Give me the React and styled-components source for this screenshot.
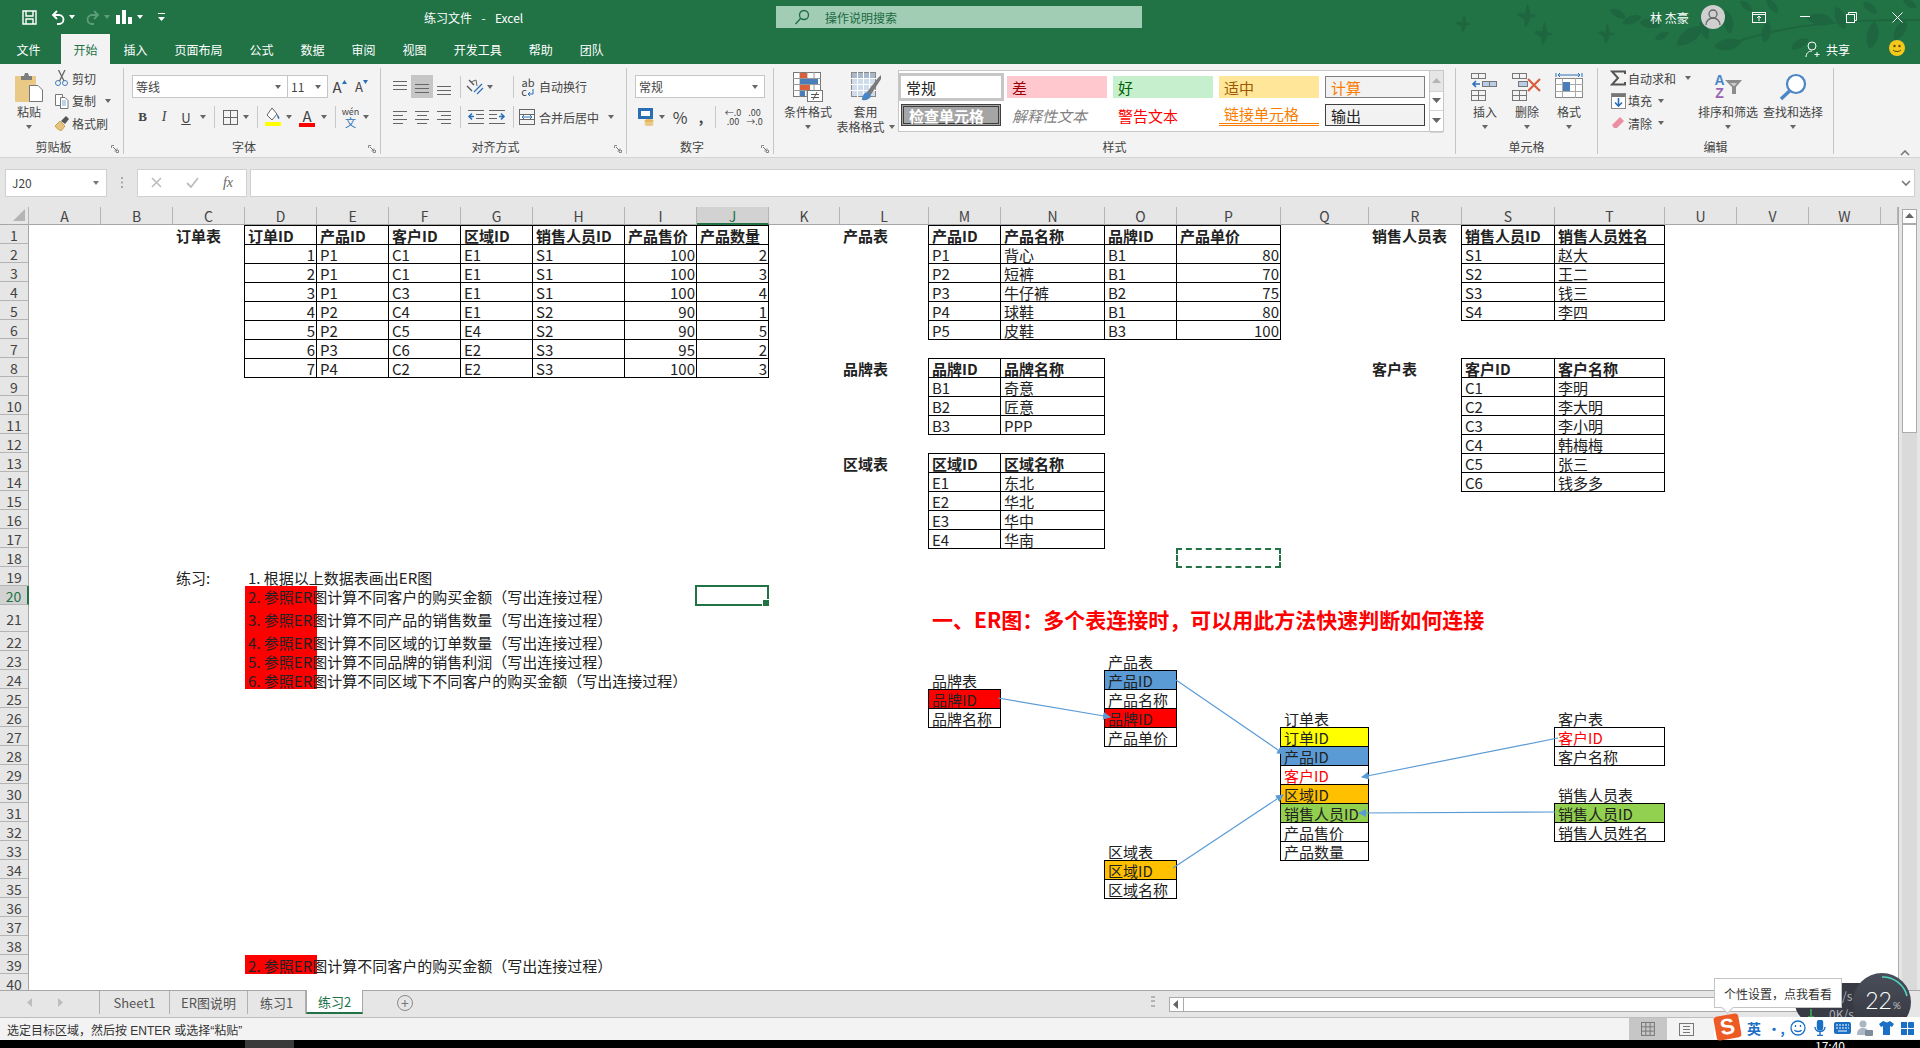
import React from 'react';
import styled, { createGlobalStyle } from 'styled-components';

const GREEN = '#217346';
const FONT = `"Noto Sans CJK SC", sans-serif`;

const GlobalStyle = createGlobalStyle`
  html, body { margin: 0; padding: 0; height: 100%; overflow: hidden; background: #000; }
  #root { height: 100%; }
  * { box-sizing: border-box; }
`;

// --- SHELL ---

const Shell = styled.div`
  position: relative;
  width: 1920px;
  height: 1048px;
  display: flex;
  flex-direction: column;
  overflow: hidden;
  font-family: ${FONT};
  font-size: 12px;
  color: #444;
  background: #f3f3f3;
`;

const GreenHead = styled.header`
  position: relative;
  height: 64px;
  background: ${GREEN};
  flex: none;
`;

const Foliage = styled.svg`
  position: absolute;
  top: 0;
  right: 0;
  pointer-events: none;
`;

const TitleBar = styled.div`
  position: relative;
  display: flex;
  align-items: center;
  height: 34px;
  color: #fff;
`;

const Slot = styled.div`
  width: ${p => p.$w}px;
  height: ${p => p.$h || 22}px;
  flex: none;
  display: flex;
  flex-direction: ${p => p.$stack ? 'column' : 'row'};
  line-height: ${p => p.$stack ? `${p.$stack}px` : 'normal'};
  align-items: center;
  justify-content: center;
  background: ${p => p.$on ? '#c6c6c6' : 'transparent'};
  color: ${p => p.$color || 'inherit'};
  font-family: ${p => p.$serif ? '"Liberation Serif", serif' : 'inherit'};
  font-weight: ${p => p.$bold ? 700 : 400};
  font-style: ${p => p.$italic ? 'italic' : 'normal'};
  font-size: ${p => p.$size || 12}px;
  text-decoration: ${p => p.$under ? 'underline' : 'none'};
`;

const Gap = styled.div`
  width: ${p => p.$w}px;
  flex: none;
`;

const Caret = styled.i`
  display: block;
  width: 0;
  height: 0;
  border: 3px solid transparent;
  border-top: 4px solid ${p => p.$color || '#666'};
  border-bottom: 0;
`;

const DocTitle = styled.div`
  width: 258px;
  flex: none;
  white-space: pre;
  word-spacing: 2px;
  margin-left: -1px;
`;

const SearchBox = styled.div`
  width: 366px;
  height: 22px;
  margin-left: 94px;
  flex: none;
  display: flex;
  align-items: center;
  gap: 15px;
  padding-left: 18px;
  background: #a0cdb4;
  color: #1c6a42;
`;

const Spring = styled.div`
  flex: 1;
`;

const UserName = styled.div`
  width: 40px;
  white-space: pre;
  margin-right: 11px;
`;

const Avatar = styled.div`
  width: 24px;
  height: 24px;
  border-radius: 50%;
  background: #cfcfcf;
  display: flex;
  align-items: center;
  justify-content: center;
  margin-right: 11px;
`;

const TabStrip = styled.nav`
  position: relative;
  display: flex;
  align-items: stretch;
  height: 30px;
  padding-left: 3px;
  color: #fff;
`;

const Tab = styled.div`
  padding: 0 ${p => p.$on ? 12.5 : 13.5}px;
  display: flex;
  align-items: center;
  background: ${p => p.$on ? '#f3f3f3' : 'transparent'};
  color: ${p => p.$on ? GREEN : '#fff'};
  margin-left: ${p => p.$on ? 7 : 0}px;
`;

const ShareBox = styled.div`
  display: flex;
  align-items: center;
  gap: 5px;
  margin-right: 70px;
`;

const Smiley = styled.div`
  position: absolute;
  top: 6px;
  right: 15px;
`;

// --- RIBBON ---

const Ribbon = styled.section`
  display: flex;
  height: 94px;
  flex: none;
  padding-top: 4px;
  background: #f3f3f3;
  border-bottom: 1px solid #d4d4d4;
`;

const Group = styled.div`
  width: ${p => p.$w}px;
  height: 86px;
  flex: none;
  display: flex;
  flex-direction: column;
  border-right: 1px solid #c6c6c6;
`;

const GroupBody = styled.div`
  flex: 1;
  display: flex;
  padding: 4px 0 0 ${p => p.$pad || 0}px;
`;

const GroupLabel = styled.div`
  height: 14px;
  display: grid;
  grid-template-columns: 1fr auto 1fr;
  align-items: center;
  line-height: 14px;
  color: #444;
`;

const LabelText = styled.span`
  grid-column: 2;
  margin-right: ${p => p.$launch ? 16 : 0}px;
`;

const Launcher = styled.svg`
  justify-self: end;
  margin: 4px 4px 0 0;
`;

const Big = styled.div`
  width: ${p => p.$w}px;
  flex: none;
  display: flex;
  flex-direction: column;
  align-items: center;
  line-height: 15px;
  text-align: center;
  white-space: nowrap;
`;

const BigIcon = styled.div`
  height: 30px;
  margin-bottom: 2px;
  display: flex;
  align-items: center;
  justify-content: center;
`;

const BigCaret = styled.div`
  height: 15px;
  display: flex;
  align-items: center;
  gap: 4px;
`;

const SmallCol = styled.div`
  width: ${p => p.$w}px;
  margin-top: -5px;
  flex: none;
`;

const SmallRow = styled.div`
  height: 22.5px;
  display: flex;
  align-items: center;
  white-space: nowrap;
`;

const SmallIcon = styled.div`
  width: 20px;
  flex: none;
  display: flex;
  justify-content: center;
`;

const Stack = styled.div`
  display: flex;
  flex-direction: column;
  gap: 8px;
  padding-top: 3px;
`;

const ToolRow = styled.div`
  display: flex;
  align-items: center;
  height: ${p => p.$h || 23}px;
`;

const Sep = styled.div`
  width: 1px;
  height: 22px;
  background: #c9c9c9;
`;

const Combo = styled.div`
  width: ${p => p.$w}px;
  height: 23px;
  flex: none;
  display: flex;
  align-items: center;
  justify-content: space-between;
  padding: 0 6px 0 3px;
  background: #fff;
  border: 1px solid #c6c6c6;
  margin-left: ${p => p.$ml || 0}px;
`;

const GrowMark = styled.svg`
  margin-top: -10px;
`;

const WenMark = styled.span`
  color: #2a6fb5;
  font-size: 11px;
`;

const WrapLine = styled.span`
  display: flex;
  align-items: flex-end;
`;

const ColorBar = styled.div`
  display: flex;
  flex-direction: column;
  align-items: center;
  line-height: 15px;
  font-size: 15px;
  color: #444;
  &::after {
    content: '';
    width: 16px;
    height: 4px;
    background: ${p => p.$bar};
  }
`;

const Gallery = styled.div`
  width: 532px;
  height: 62px;
  margin: -2px 0 0 3px;
  flex: none;
  display: grid;
  grid-template-columns: repeat(5, 100px);
  grid-template-rows: 22px 22px;
  gap: 6px;
  padding: 5px 2px;
  background: #fff;
  border: 1px solid #c6c6c6;
`;

const StyleChip = styled.div`
  display: flex;
  align-items: center;
  padding-left: 5px;
  font-size: 15px;
  white-space: nowrap;
  background: ${p => p.$bg || 'transparent'};
  color: ${p => p.$color || '#222'};
  font-weight: ${p => p.$bold ? 700 : 400};
  font-style: ${p => p.$italic ? 'italic' : 'normal'};
  border: ${p => p.$border || 'none'};
  border-bottom: ${p => p.$bottom || p.$border || 'none'};
  outline: ${p => p.$sel ? '3px solid #c6c6c6' : 'none'};
`;

const GalleryScroll = styled.div`
  width: 14px;
  height: 62px;
  margin-top: -2px;
  flex: none;
  display: grid;
  grid-template-rows: 21px 19px 22px;
  border: 1px solid #c6c6c6;
  border-left: 0;
  background: #fff;
  div {
    display: flex;
    align-items: center;
    justify-content: center;
    border-bottom: 1px solid #d4d4d4;
  }
  div:first-child { background: #e6e6e6; }
`;

const SortLetters = styled.div`
  display: flex;
  flex-direction: column;
  font: 700 14px/13px "Liberation Sans", sans-serif;
  text-align: center;
  span:first-child { color: #4a86c5; }
  span:last-child { color: #9a62b3; }
`;

const Collapse = styled.div`
  flex: 1;
  display: flex;
  justify-content: flex-end;
  align-items: flex-end;
  padding: 0 10px 1px 0;
`;

// --- FORMULA BAR ---

const FormulaZone = styled.div`
  height: 49px;
  flex: none;
  display: flex;
  align-items: center;
  padding: 0 5px;
  background: #e6e6e6;
`;

const NameBox = styled.div`
  width: 102px;
  height: 28px;
  display: flex;
  align-items: center;
  justify-content: space-between;
  padding: 0 7px 0 6px;
  background: #fff;
  border: 1px solid #d0d0d0;
  color: #444;
`;

const Dots = styled.div`
  width: 30px;
  display: flex;
  justify-content: center;
`;

const FxBox = styled.div`
  width: 110px;
  height: 28px;
  display: flex;
  align-items: center;
  background: #fff;
  border: 1px solid #d0d0d0;
`;

const FxSlot = styled.div`
  width: 36px;
  display: flex;
  justify-content: center;
  color: #666;
  font-family: "Liberation Serif", serif;
  font-style: italic;
  font-size: 14px;
`;

const FormulaInput = styled.div`
  flex: 1;
  height: 28px;
  margin-left: 3px;
  display: flex;
  align-items: center;
  justify-content: flex-end;
  padding-right: 3px;
  background: #fff;
  border: 1px solid #d0d0d0;
`;

// --- SHEET ---

const SheetArea = styled.main`
  flex: 1;
  min-height: 0;
  display: flex;
  background: #e6e6e6;
`;

const Grid = styled.div`
  position: relative;
  width: 1899px;
  height: 783px;
  flex: none;
  overflow: hidden;
  display: grid;
  align-content: start;
  background: #fff;
  border-right: 1px solid #ababab;
  font-size: 15px;
  color: #222;
`;

const Corner = styled.div`
  background: #e6e6e6;
  border-right: 1px solid #b4b4b4;
  border-bottom: 1px solid #a6a6a6;
  display: flex;
  align-items: flex-end;
  justify-content: flex-end;
  padding: 0 3px 3px 0;
`;

const ColHead = styled.div`
  display: flex;
  align-items: center;
  justify-content: center;
  padding-top: 1px;
  background: ${p => p.$on ? '#d2d2d2' : '#e6e6e6'};
  color: ${p => p.$on ? GREEN : '#444'};
  border-right: 1px solid #b4b4b4;
  border-bottom: ${p => p.$on ? `2px solid ${GREEN}` : '1px solid #a6a6a6'};
  font-size: 14px;
  line-height: 1;
`;

const RowHead = styled.div`
  display: flex;
  align-items: center;
  justify-content: center;
  padding-top: 2px;
  background: ${p => p.$on ? '#d2d2d2' : '#e6e6e6'};
  color: ${p => p.$on ? GREEN : '#444'};
  border-right: ${p => p.$on ? `2px solid ${GREEN}` : '1px solid #a6a6a6'};
  border-bottom: 1px solid #b4b4b4;
  font-size: 14px;
  line-height: 1;
`;

const Cell = styled.div`
  position: relative;
  min-width: 0;
  display: flex;
  align-items: center;
  justify-content: ${p => p.$right ? 'flex-end' : 'flex-start'};
  padding: 1px ${p => p.$right ? 2 : 0}px 0 ${p => p.$right ? 0 : 3}px;
  white-space: nowrap;
  background: ${p => p.$bg || 'transparent'};
  color: ${p => p.$color || '#222'};
  font-weight: ${p => p.$bold ? 700 : 400};
  font-size: ${p => p.$size || 15}px;
  ${p => p.$box && `
    &::after {
      content: '';
      position: absolute;
      inset: 0 0 -1px -1px;
      border: 1px solid #000;
    }
  `}
  ${p => p.$dash && `
    &::after {
      content: '';
      position: absolute;
      inset: 0 0 -1px -1px;
      border: 2px dashed ${GREEN};
    }
  `}
`;

const Selection = styled.div`
  position: absolute;
  inset: -1px 0 -1px -2px;
  border: 2px solid ${GREEN};
  &::after {
    content: '';
    position: absolute;
    right: -3px;
    bottom: -3px;
    width: 6px;
    height: 6px;
    background: ${GREEN};
    border: 1px solid #fff;
  }
`;

const ArrowLayer = styled.svg`
  position: absolute;
  left: 0;
  top: 0;
  pointer-events: none;
`;

const VScroll = styled.div`
  width: 15px;
  margin: 2px 0 0 3px;
  display: flex;
  flex-direction: column;
  background: #dadada;
`;

const ScrollBtn = styled.div`
  height: 15px;
  flex: none;
  display: flex;
  align-items: center;
  justify-content: center;
  background: #fff;
  border: 1px solid #ababab;
`;

const VThumb = styled.div`
  height: 209px;
  flex: none;
  background: #fff;
  border: 1px solid #ababab;
`;

// --- SHEET TABS + STATUS ---

const TabsBar = styled.div`
  height: 28px;
  flex: none;
  display: flex;
  align-items: flex-start;
  background: #e6e6e6;
  border-top: 1px solid #a6a6a6;
  border-bottom: 1px solid #bdbdbd;
`;

const NavArrows = styled.div`
  width: 100px;
  height: 23px;
  display: flex;
  align-items: center;
  gap: 22px;
  padding-left: 26px;
  border-right: 1px solid #b0b0b0;
`;

const SheetTab = styled.div`
  width: ${p => p.$w}px;
  height: ${p => p.$on ? 24 : 23}px;
  margin-top: ${p => p.$on ? -1 : 0}px;
  display: flex;
  align-items: center;
  justify-content: center;
  font-size: 13px;
  color: ${p => p.$on ? GREEN : '#555'};
  background: ${p => p.$on ? '#fff' : 'transparent'};
  border-right: 1px solid ${p => p.$on ? '#a6a6a6' : '#b0b0b0'};
  border-bottom: ${p => p.$on ? `2px solid ${GREEN}` : 'none'};
  border-left: ${p => p.$on ? '1px solid #a6a6a6' : 'none'};
`;

const PlusBtn = styled.div`
  width: 16px;
  height: 16px;
  margin: 4px 0 0 34px;
  border: 1.5px solid #8a8a8a;
  border-radius: 50%;
  color: #777;
  display: flex;
  align-items: center;
  justify-content: center;
  font-size: 14px;
  line-height: 1;
`;

const SplitDots = styled.div`
  width: 4px;
  height: 11px;
  margin: 5px 14px 0 0;
  background: repeating-linear-gradient(#b4b4b4 0 2px, transparent 2px 4.5px);
`;

const HScroll = styled.div`
  width: 730px;
  height: 15px;
  margin-top: 6px;
  display: flex;
  flex: none;
`;

const HBtn = styled.div`
  width: 15px;
  display: flex;
  align-items: center;
  justify-content: center;
  background: #fff;
  border: 1px solid #ababab;
`;

const HThumb = styled.div`
  flex: 1;
  background: #fff;
  border: 1px solid #ababab;
  border-left: 0;
`;

const StatusBar = styled.footer`
  height: 22px;
  flex: none;
  display: flex;
  align-items: center;
  padding: 0 215px 0 7px;
  background: #f3f3f3;
  color: #333;
  font-family: "Liberation Sans", ${FONT};
`;

const ViewBtn = styled.div`
  width: 38px;
  height: 22px;
  display: flex;
  align-items: center;
  justify-content: center;
  background: ${p => p.$on ? '#c6c6c6' : 'transparent'};
`;

const TaskBar = styled.div`
  height: 8px;
  flex: none;
  background: #000;
  position: relative;
  overflow: hidden;
  padding-left: 245px;
`;

const TaskItem = styled.div`
  width: 49px;
  height: 8px;
  background: #3a3a3a;
`;

const Clock = styled.div`
  position: absolute;
  left: 1815px;
  top: -1px;
  color: #fff;
  font-size: 12px;
  line-height: 14px;
`;

// --- DESKTOP OVERLAYS ---

const NetPill = styled.div`
  position: absolute;
  left: 1795px;
  top: 983px;
  width: 80px;
  height: 40px;
  border-radius: 20px 0 0 20px;
  background: #383b44;
  color: #aeb2ba;
  font-size: 12px;
  padding-top: 4px;
  line-height: 18px;
`;

const NetRow = styled.div`
  display: flex;
  align-items: center;
  gap: 12px;
  margin-left: ${p => p.$ml || 0}px;
`;

const NetArrow = styled.span`
  color: #3fbf5f;
  font-weight: 700;
`;

const Gauge = styled.div`
  position: absolute;
  left: 1853px;
  top: 973px;
  width: 58px;
  height: 58px;
  border-radius: 50%;
  background: linear-gradient(#4a4e5a, #34373f);
  color: #fff;
  display: flex;
  align-items: baseline;
  justify-content: center;
  padding: 14px 0 0 2px;
  font-family: "Lato", sans-serif;
  font-weight: 300;
  font-size: 23px;
  line-height: 26px;
  small { font-size: 10px; margin-left: 1px; }
  svg { position: absolute; left: 0; top: 0; }
`;

const Tip = styled.div`
  position: absolute;
  left: 1714px;
  top: 978px;
  width: 128px;
  height: 30px;
  display: flex;
  align-items: center;
  justify-content: center;
  background: #fff;
  border: 1px solid #c4c4c4;
  color: #333;
  white-space: nowrap;
  &::after {
    content: '';
    position: absolute;
    left: 8px;
    bottom: -5px;
    width: 8px;
    height: 8px;
    background: #fff;
    border-right: 1px solid #c4c4c4;
    border-bottom: 1px solid #c4c4c4;
    transform: rotate(45deg);
  }
`;

const ImeBar = styled.div`
  position: absolute;
  left: 1714px;
  top: 1017px;
  width: 206px;
  height: 22px;
  display: flex;
  align-items: center;
  background: #fff;
  color: #1b6fc4;
`;

const ImeLogo = styled.div`
  width: 25px;
  height: 24px;
  margin: -2px 3px 0 1px;
  flex: none;
  display: flex;
  align-items: center;
  justify-content: center;
  border-radius: 3px;
  background: #ee5a24;
  color: #fff;
  font: 700 22px "Liberation Sans", sans-serif;
  transform: rotate(-10deg);
`;

// --- DRAWN ICONS ---

const Svg = ({ w = 16, h = 16, children, ...rest }) => (
  <svg width={w} height={h} viewBox={`0 0 ${w} ${h}`} fill="none" {...rest}>{children}</svg>
);

const Lines = ({ rows, w = 16, h = 16 }) => (
  <Svg w={w} h={h}>
    {rows.map(([x1, x2, y], i) => <path key={i} d={`M${x1} ${y + 0.5}H${x2}`} stroke="#666" />)}
  </Svg>
);

const CellsBase = ({ y = 0, x = 0, cols = 2, rows = 1, cw = 8, ch = 7, stroke = '#777' }) => (
  <g stroke={stroke}>
    <rect x={x + 0.5} y={y + 0.5} width={cols * cw} height={rows * ch} />
    {Array.from({ length: cols - 1 }, (_, i) => <path key={i} d={`M${x + 0.5 + (i + 1) * cw} ${y}v${rows * ch}`} />)}
    {Array.from({ length: rows - 1 }, (_, i) => <path key={i} d={`M${x} ${y + 0.5 + (i + 1) * ch}h${cols * cw}`} />)}
  </g>
);

const LEAVES = [
  [218, 14, 30, 0.9], [232, 20, -20, 1], [250, 24, 10, 1.1], [262, 36, -30, 0.8], [290, 36, -35, 1.6], [304, 30, 70, 1],
  [328, 22, 80, 1.2], [328, 44, 170, 1.4], [366, 32, 100, 1.1], [346, 6, 40, 0.8], [372, 6, 50, 0.9], [420, 20, 10, 1.4],
  [440, 18, 70, 1.2], [472, 35, 100, 1.4], [500, 30, 120, 1.2], [470, 8, 40, 0.9], [510, 4, 30, 0.8], [400, 44, -30, 1],
];

const Leaves = () => (
  <Foliage width="520" height="64" viewBox="0 0 520 64" fill="none">
    <g fill="#1e6640">
      {[[62, 24, 0.8], [125, 16, 1], [142, 34, 1], [205, 34, 0.9]].map(([x, y, s], i) => (
        <path key={i} transform={`translate(${x} ${y}) scale(${s})`} d="M-8-2C-4-4-2-3 0-2L2-12C4-10 5-6 5-2L12 0 5 2C4 6 2 10 0 12L-1 3C-4 2-6 0-8-2Z" />
      ))}
      {LEAVES.map(([x, y, r, s], i) => (
        <path key={i} transform={`translate(${x} ${y}) rotate(${r}) scale(${s})`} d="M-10 0C-5-6 5-6 10 0 5 5-5 5-10 0Z" />
      ))}
    </g>
    <path d="M320 48Q390 18 520 20" stroke="#1e6640" strokeWidth="2" />
  </Foliage>
);

const Launch = () => (
  <Launcher width="8" height="8" viewBox="0 0 8 8">
    <path d="M.5 3V.5H3M5 7.5H7.5V5" fill="none" stroke="#888" />
    <path d="M2 2 6 6M6 3.5V6H3.5" fill="none" stroke="#777" />
  </Launcher>
);

const PasteIcon = () => (
  <Svg w={30} h={30}>
    <rect x="1" y="4" width="21" height="26" rx="1" fill="#eac885" />
    <path d="M7 4h3l1-3h3l1 3h3v4H7Z" fill="#7d7d7d" />
    <path d="M15.5 13.5H24l4.5 4.5v11.5h-13Z" fill="#fff" stroke="#777" />
  </Svg>
);

const ScissorsIcon = () => (
  <Svg>
    <circle cx="4" cy="13" r="2.5" stroke="#3f7fbf" />
    <circle cx="11" cy="13" r="2.5" stroke="#3f7fbf" />
    <path d="M4.5 0 10 11M11 0 5.5 11" stroke="#666" strokeWidth="1.3" />
  </Svg>
);

const CopyIcon = () => (
  <Svg>
    <path d="M1.5 1.5h7v11h-7Z" fill="#fff" stroke="#777" />
    <path d="M6.5 4.5H11l3 3v8H6.5Z" fill="#fff" stroke="#777" />
    <path d="M8 8h4M8 10h4M8 12h4" stroke="#7da7d0" />
  </Svg>
);

const BrushIcon = () => (
  <Svg>
    <path d="M1 11 6 6l5 5-4 5C5 15 2 13 1 11Z" fill="#e6c27a" stroke="#c8a45a" />
    <path d="M7 6 12 1l3 3-4 5Z" fill="#555" />
  </Svg>
);

const FillIcon = () => (
  <Svg w={18} h={20}>
    <path d="M8 1 3 8l5 5 5-6Z" fill="#fff" stroke="#666" />
    <path d="M13 7c2 2 3 4 2 5-1 0-2-2-2-5Z" fill="#2a6fb5" />
    <rect x="1" y="15" width="16" height="4" fill="#ff0" />
  </Svg>
);

const OrientIcon = () => (
  <Svg w={18} h={18}>
    <path d="M3 2 8 7M1 8l5 5" stroke="#555" strokeWidth="1.4" />
    <path d="M8 14 16 6M11 16l6-6" stroke="#2a6fb5" strokeWidth="1.2" />
    <path d="M5 4l5-2 1 6" stroke="#666" />
  </Svg>
);

const IndentIcon = ({ flip }) => (
  <Svg w={18} h={18} transform={flip ? 'scale(-1 1)' : undefined}>
    <path d="M1 2.5h16M9 6.5h8M9 10.5h8M1 15.5h16" stroke="#666" />
    <path d="M7 8.5H2M5 5.5 2 8.5l3 3" stroke="#2a6fb5" strokeWidth="1.6" />
  </Svg>
);

const WrapIcon = () => (
  <Svg w={8} h={9}>
    <path d="M1 7h5V2" stroke="#2a6fb5" />
    <path d="M3 9 1 7l2-2" stroke="#2a6fb5" />
  </Svg>
);

const MergeIcon = () => (
  <Svg w={17} h={16}>
    <rect x=".5" y=".5" width="15" height="15" stroke="#666" />
    <path d="M0 5.5h16M0 10.5h16" stroke="#666" />
    <path d="M1 6h14v4H1Z" fill="#fff" />
    <path d="M3 8h10M5 6 3 8l2 2M11 6l2 2-2 2" stroke="#2a6fb5" />
  </Svg>
);

const AcctIcon = () => (
  <Svg w={18} h={20}>
    <rect x="1" y="1" width="15" height="11" fill="#2a6fb5" />
    <rect x="4" y="4" width="9" height="5" fill="#fff" />
    <ellipse cx="12" cy="14" rx="4.5" ry="2" fill="#e3b95c" />
    <ellipse cx="12" cy="17" rx="4.5" ry="2" fill="#eac885" />
  </Svg>
);

const CondFmtIcon = () => (
  <Svg w={30} h={30}>
    <rect x=".5" y=".5" width="27" height="24" fill="#fff" stroke="#777" />
    <path d="M7 0v25M14 0v25M21 0v25M0 6.5h28M0 12.5h28M0 18.5h28" stroke="#999" />
    <rect x="7" y="1" width="7" height="5" fill="#d9603b" />
    <rect x="7" y="7" width="18" height="5" fill="#4a7ebb" />
    <rect x="7" y="13" width="10" height="5" fill="#d9603b" />
    <rect x="7" y="19" width="5" height="5" fill="#4a7ebb" />
    <rect x="14.5" y="18.5" width="15" height="11" fill="#fff" stroke="#777" />
    <path d="M18 22.5h8M18 25.5h8M24 20l-4 8" stroke="#555" />
  </Svg>
);

const TableFmtIcon = () => (
  <Svg w={30} h={30}>
    <rect x=".5" y=".5" width="24" height="24" fill="#cfdcec" stroke="#888" />
    <rect x="1" y="1" width="23" height="5" fill="#a9b9cc" />
    <path d="M6.5 0v25M12.5 0v25M18.5 0v25M0 6.5h25M0 12.5h25M0 18.5h25" stroke="#fff" />
    <path d="M16 20 27 6l3-3v4L19 24Z" fill="#7a7a7a" />
    <path d="M11 28c0-5 3-8 6-8l3 4c-1 3-5 5-9 4Z" fill="#4a86c5" />
  </Svg>
);

const InsertIcon = () => (
  <Svg w={28} h={28}>
    <CellsBase x={0} y={0} cols={2} cw={7} ch={5} />
    <CellsBase x={0} y={17} cols={2} rows={2} cw={7} ch={5} />
    <rect x="11.5" y="8.5" width="14" height="5" fill="#b9cde5" stroke="#777" />
    <path d="M18.5 8v6" stroke="#777" />
    <path d="M9 11H2M5 8l-3 3 3 3" stroke="#2a6fb5" strokeWidth="1.6" />
  </Svg>
);

const DeleteIcon = () => (
  <Svg w={30} h={28}>
    <CellsBase x={0} y={0} cols={2} cw={7} ch={5} />
    <CellsBase x={0} y={17} cols={2} rows={2} cw={7} ch={5} />
    <rect x="6.5" y="8.5" width="9" height="5" fill="#b9cde5" stroke="#777" />
    <path d="M16 6 28 18M28 6 16 18" stroke="#d9603b" strokeWidth="2.2" />
  </Svg>
);

const FormatIcon = () => (
  <Svg w={28} h={30}>
    <path d="M1 1v4M27 1v4M3 3h22" stroke="#2a6fb5" />
    <path d="M3 3l2-2M3 3l2 2M25 3l-2-2M25 3l-2 2" stroke="#2a6fb5" />
    <rect x=".5" y="6.5" width="27" height="19" fill="#fff" stroke="#888" />
    <path d="M7.5 6v20M20.5 6v20M0 12.5h28M0 19.5h28" stroke="#aaa" />
    <rect x="8" y="10" width="7" height="9" fill="#4a7ebb" />
  </Svg>
);

const SigmaIcon = () => (
  <Svg w={16} h={16}>
    <path d="M15 4V1.5H2L8 8l-6 6.5h13V12" stroke="#555" strokeWidth="2" />
  </Svg>
);

const FillDownIcon = () => (
  <Svg w={15} h={16}>
    <rect x=".5" y=".5" width="14" height="15" fill="#fff" stroke="#888" />
    <rect x="1" y="1" width="13" height="3" fill="#777" />
    <path d="M7.5 5v8M4 9.5l3.5 3.5L11 9.5" stroke="#2a6fb5" strokeWidth="1.6" />
  </Svg>
);

const EraserIcon = () => (
  <Svg w={14} h={14}>
    <path d="M9 1 13 5 6 12H3L1 9Z" fill="#ea8fa3" />
  </Svg>
);

const FunnelIcon = () => (
  <Svg w={17} h={14}>
    <path d="M0 0h17L11 7v7H7V7Z" fill="#8c8c8c" />
    <path d="M5 3h7L9.5 6h-1Z" fill="#ccc" />
  </Svg>
);

const MagnifierIcon = () => (
  <Svg w={28} h={28}>
    <circle cx="17" cy="11" r="9" fill="#fff" stroke="#4a86c5" strokeWidth="2.2" />
    <path d="M10.5 18 2 26" stroke="#4a86c5" strokeWidth="3.4" />
  </Svg>
);

const Chevron = ({ up }) => (
  <svg width="10" height="6" viewBox="0 0 10 6">
    <path d={up ? 'M1 5l4-4 4 4' : 'M1 1l4 4 4-4'} fill="none" stroke="#777" strokeWidth="1.6" />
  </svg>
);

const Tri = ({ dir = 'up', color = '#777' }) => {
  const d = { up: 'M0 6 4.5 1 9 6Z', down: 'M0 1 4.5 6 9 1Z', left: 'M6 0 1 4.5 6 9Z', right: 'M1 0 6 4.5 1 9Z' }[dir];
  return <svg width="9" height="9" viewBox="0 0 9 9"><path d={d} fill={color} /></svg>;
};

// --- SHEET DATA ---

const COLS = [
  ['A', 72], ['B', 72], ['C', 72], ['D', 72], ['E', 72], ['F', 72], ['G', 72], ['H', 92], ['I', 72], ['J', 72],
  ['K', 71], ['L', 89], ['M', 72], ['N', 104], ['O', 72], ['P', 104], ['Q', 88], ['R', 93], ['S', 93], ['T', 110],
  ['U', 72], ['V', 72], ['W', 72],
];
const ROW_COUNT = 40;
const rowHeight = n => (n === 21 ? 27 : 19);

const cells = {};
const letters = COLS.map(c => c[0]);
const put = (col, row, text, extra = {}) => { cells[col + row] = { text, ...extra }; };

const putTable = (col, row, rows) => {
  const start = letters.indexOf(col);
  rows.forEach((r, ri) => r.forEach((v, ci) => {
    put(letters[start + ci], row + ri, v, { box: true, bold: ri === 0, right: typeof v === 'number' });
  }));
};

const putEr = (col, row, title, items) => {
  put(col, row, title);
  items.forEach((it, i) => {
    const [text, bg, color] = Array.isArray(it) ? it : [it];
    put(col, row + 1 + i, text, { box: true, bg, color });
  });
};

put('C', 1, '订单表', { bold: true });
putTable('D', 1, [
  ['订单ID', '产品ID', '客户ID', '区域ID', '销售人员ID', '产品售价', '产品数量'],
  [1, 'P1', 'C1', 'E1', 'S1', 100, 2],
  [2, 'P1', 'C1', 'E1', 'S1', 100, 3],
  [3, 'P1', 'C3', 'E1', 'S1', 100, 4],
  [4, 'P2', 'C4', 'E1', 'S2', 90, 1],
  [5, 'P2', 'C5', 'E4', 'S2', 90, 5],
  [6, 'P3', 'C6', 'E2', 'S3', 95, 2],
  [7, 'P4', 'C2', 'E2', 'S3', 100, 3],
]);

put('L', 1, '产品表', { bold: true });
putTable('M', 1, [
  ['产品ID', '产品名称', '品牌ID', '产品单价'],
  ['P1', '背心', 'B1', 80],
  ['P2', '短裤', 'B1', 70],
  ['P3', '牛仔裤', 'B2', 75],
  ['P4', '球鞋', 'B1', 80],
  ['P5', '皮鞋', 'B3', 100],
]);

put('R', 1, '销售人员表', { bold: true });
putTable('S', 1, [['销售人员ID', '销售人员姓名'], ['S1', '赵大'], ['S2', '王二'], ['S3', '钱三'], ['S4', '李四']]);

put('L', 8, '品牌表', { bold: true });
putTable('M', 8, [['品牌ID', '品牌名称'], ['B1', '奇意'], ['B2', '匠意'], ['B3', 'PPP']]);

put('L', 13, '区域表', { bold: true });
putTable('M', 13, [['区域ID', '区域名称'], ['E1', '东北'], ['E2', '华北'], ['E3', '华中'], ['E4', '华南']]);

put('R', 8, '客户表', { bold: true });
putTable('S', 8, [
  ['客户ID', '客户名称'], ['C1', '李明'], ['C2', '李大明'], ['C3', '李小明'], ['C4', '韩梅梅'], ['C5', '张三'], ['C6', '钱多多'],
]);

put('P', 18, '', { dash: true });
put('C', 19, '练习:');
put('D', 19, '1. 根据以上数据表画出ER图');
const RED = '#ff0000';
put('D', 20, '2. 参照ER图计算不同客户的购买金额（写出连接过程）', { bg: RED });
put('D', 21, '3. 参照ER图计算不同产品的销售数量（写出连接过程）', { bg: RED });
put('D', 22, '4. 参照ER图计算不同区域的订单数量（写出连接过程）', { bg: RED });
put('D', 23, '5. 参照ER图计算不同品牌的销售利润（写出连接过程）', { bg: RED });
put('D', 24, '6. 参照ER图计算不同区域下不同客户的购买金额（写出连接过程）', { bg: RED });
put('D', 39, '2. 参照ER图计算不同客户的购买金额（写出连接过程）', { bg: RED });
put('M', 21, '一、ER图：多个表连接时，可以用此方法快速判断如何连接', { bold: true, color: RED, size: 21 });

putEr('O', 23, '产品表', [['产品ID', '#5b9bd5'], '产品名称', ['品牌ID', RED], '产品单价']);
putEr('M', 24, '品牌表', [['品牌ID', RED], '品牌名称']);
putEr('Q', 26, '订单表', [
  ['订单ID', '#ffff00'], ['产品ID', '#5b9bd5'], ['客户ID', null, RED], ['区域ID', '#ffc000'],
  ['销售人员ID', '#92d050'], '产品售价', '产品数量',
]);
putEr('T', 26, '客户表', [['客户ID', null, RED], '客户名称']);
putEr('T', 30, '销售人员表', [['销售人员ID', '#92d050'], '销售人员姓名']);
putEr('O', 33, '区域表', [['区域ID', '#ffc000'], '区域名称']);

const ARROWS = [
  [998, 698, 1110, 717],
  [1176, 680, 1284, 754],
  [1558, 738, 1362, 777],
  [1555, 812, 1359, 813],
  [1173, 868, 1283, 795],
];

const GRID_COLS = `29px ${COLS.map(c => c[1] + 'px').join(' ')} 1fr`;
const GRID_ROWS = `18px ${Array.from({ length: ROW_COUNT }, (_, i) => rowHeight(i + 1) + 'px').join(' ')}`;

const Sheet = () => (
  <Grid style={{ gridTemplateColumns: GRID_COLS, gridTemplateRows: GRID_ROWS }}>
    <Corner><svg width="12" height="12"><path d="M12 0V12H0Z" fill="#b4b4b4" /></svg></Corner>
    {letters.map(l => <ColHead key={l} $on={l === 'J'}>{l}</ColHead>)}
    <ColHead />
    {Array.from({ length: ROW_COUNT }, (_, i) => i + 1).map(row => (
      <React.Fragment key={row}>
        <RowHead $on={row === 20}>{row}</RowHead>
        {letters.map(l => {
          const c = cells[l + row];
          return (
            <Cell
              key={l}
              $box={c?.box}
              $dash={c?.dash}
              $bold={c?.bold}
              $right={c?.right}
              $bg={c?.bg}
              $color={c?.color}
              $size={c?.size}
            >
              {c?.text}
              {l === 'J' && row === 20 && <Selection />}
            </Cell>
          );
        })}
        <Cell />
      </React.Fragment>
    ))}
    <ArrowLayer width="1899" height="783">
      <defs>
        <marker id="head" markerWidth="8" markerHeight="8" refX="7" refY="4" orient="auto" markerUnits="userSpaceOnUse">
          <path d="M0 0 8 4 0 8Z" fill="#5b9bd5" />
        </marker>
      </defs>
      {ARROWS.map(([x1, y1, x2, y2], i) => (
        <line key={i} x1={x1} y1={y1 - 207} x2={x2} y2={y2 - 207} stroke="#5b9bd5" strokeWidth="1.2" markerEnd="url(#head)" />
      ))}
    </ArrowLayer>
  </Grid>
);

// --- PAGE ---

const TABS = ['插入', '页面布局', '公式', '数据', '审阅', '视图', '开发工具', '帮助', '团队'];

const CHIPS = [
  { text: '常规', sel: true, bg: '#fff' },
  { text: '差', bg: '#ffc7ce', color: '#9c0006' },
  { text: '好', bg: '#c6efce', color: '#006100' },
  { text: '适中', bg: '#ffe699', color: '#9c5700' },
  { text: '计算', bg: '#f2f2f2', color: '#fa7d00', border: '1px solid #7f7f7f' },
  { text: '检查单元格', bg: '#a5a5a5', color: '#fff', bold: true, border: '3px double #3f3f3f' },
  { text: '解释性文本', color: '#7f7f7f', italic: true },
  { text: '警告文本', color: '#ff0000' },
  { text: '链接单元格', color: '#fa7d00', bottom: '3px double #fa7d00' },
  { text: '输出', bg: '#f2f2f2', border: '1px solid #3f3f3f' },
];

const Label = ({ text, launch }) => (
  <GroupLabel><LabelText $launch={launch}>{text}</LabelText>{launch && <Launch />}</GroupLabel>
);

const App = () => (
  <Shell>
    <GlobalStyle />
    <GreenHead>
      <Leaves />
      <TitleBar>
        <Gap $w={19} />
        <Slot $w={20}>
          <svg width="15" height="15" viewBox="0 0 15 15" fill="none" stroke="#fff" strokeWidth="1.4">
            <path d="M1 1h13v13H1Z" /><path d="M4 1v5h7V1M4 14V9h7v5" />
          </svg>
        </Slot>
        <Gap $w={9} />
        <Slot $w={20}>
          <svg width="16" height="16" viewBox="0 0 16 16" fill="none" stroke="#fff" strokeWidth="1.8">
            <path d="M7 2 3 6l4 4" /><path d="M3 6h6a4 4 0 0 1 0 9H7" />
          </svg>
        </Slot>
        <Slot $w={8}><Caret $color="#fff" /></Slot>
        <Gap $w={7} />
        <Slot $w={20}>
          <svg width="16" height="16" viewBox="0 0 16 16" fill="none" stroke="#5f9c7c" strokeWidth="1.8">
            <path d="M9 2l4 4-4 4" /><path d="M13 6H7a4 4 0 0 0 0 9h2" />
          </svg>
        </Slot>
        <Slot $w={8}><Caret $color="#5f9c7c" /></Slot>
        <Gap $w={3} />
        <Slot $w={20}>
          <svg width="16" height="16" viewBox="0 0 16 16" fill="#fff">
            <rect x="0" y="6" width="4" height="9" /><rect x="6" y="1" width="4" height="14" /><rect x="12" y="8" width="4" height="7" />
          </svg>
        </Slot>
        <Slot $w={12}><Caret $color="#fff" /></Slot>
        <Gap $w={9} />
        <Slot $w={12}>
          <svg width="7" height="9" viewBox="0 0 7 9" fill="#fff"><rect y="0" width="7" height="1" /><path d="M0 4h7L3.5 8Z" /></svg>
        </Slot>
        <Gap $w={258} />
        <DocTitle>练习文件  -  Excel</DocTitle>
        <SearchBox>
          <svg width="16" height="16" viewBox="0 0 16 16" fill="none" stroke="#1c6a42" strokeWidth="1.3">
            <circle cx="10" cy="6" r="4.5" /><path d="M6.5 9.5 1.5 15" />
          </svg>
          操作说明搜索
        </SearchBox>
        <Spring />
        <UserName>林 杰豪</UserName>
        <Avatar>
          <svg width="16" height="18" viewBox="0 0 16 18" fill="none" stroke="#666" strokeWidth="1.3">
            <circle cx="8" cy="6" r="4" /><path d="M1 17c0-4 3-7 7-7s7 3 7 7" />
          </svg>
        </Avatar>
        <Slot $w={46}>
          <svg width="14" height="11" viewBox="0 0 14 11" fill="none" stroke="#fff">
            <rect x=".5" y=".5" width="13" height="10" /><path d="M0 2.5h14M7 9V4M5 6l2-2 2 2" />
          </svg>
        </Slot>
        <Slot $w={46}><svg width="10" height="2"><rect width="10" height="1" fill="#fff" /></svg></Slot>
        <Slot $w={46}>
          <svg width="11" height="11" viewBox="0 0 11 11" fill="none" stroke="#fff">
            <rect x=".5" y="2.5" width="8" height="8" /><path d="M2.5 2.5v-2h8v8h-2" />
          </svg>
        </Slot>
        <Slot $w={46}>
          <svg width="11" height="11" viewBox="0 0 11 11" stroke="#fff"><path d="M.5.5l10 10M10.5.5l-10 10" /></svg>
        </Slot>
      </TitleBar>
      <TabStrip>
        <Tab>文件</Tab>
        <Tab $on>开始</Tab>
        {TABS.map(t => <Tab key={t}>{t}</Tab>)}
        <Spring />
        <ShareBox>
          <svg width="16" height="17" viewBox="0 0 16 17" fill="none" stroke="#fff">
            <circle cx="7" cy="5" r="4" /><path d="M1 16c0-3 2-6 6-6M12 11v5M9.5 13.5h5" />
          </svg>
          共享
        </ShareBox>
        <Smiley>
          <svg width="16" height="16" viewBox="0 0 16 16">
            <circle cx="8" cy="8" r="8" fill="#f5c91c" />
            <circle cx="5.5" cy="6" r="1.2" fill="#5a4a10" /><circle cx="10.5" cy="6" r="1.2" fill="#5a4a10" />
            <path d="M4 10c1 2 7 2 8 0" fill="none" stroke="#5a4a10" />
          </svg>
        </Smiley>
      </TabStrip>
    </GreenHead>

    <Ribbon>
      <Group $w={124}>
        <GroupBody $pad={10}>
          <Big $w={38}>
            <BigIcon><PasteIcon /></BigIcon>
            粘贴
            <BigCaret><Caret /></BigCaret>
          </Big>
          <Gap $w={4} />
          <SmallCol $w={70}>
            <SmallRow><SmallIcon><ScissorsIcon /></SmallIcon>剪切</SmallRow>
            <SmallRow><SmallIcon><CopyIcon /></SmallIcon>复制<Gap $w={9} /><Caret /></SmallRow>
            <SmallRow><SmallIcon><BrushIcon /></SmallIcon>格式刷</SmallRow>
          </SmallCol>
        </GroupBody>
        <Label text="剪贴板" launch />
      </Group>

      <Group $w={257}>
        <GroupBody $pad={8}>
          <Stack>
            <ToolRow>
              <Combo $w={156}>等线<Caret /></Combo>
              <Combo $w={41} $ml={-1}>11<Caret /></Combo>
              <Slot $w={23} $size={15}>A<GrowMark width="5" height="4"><path d="M0 4 2.5 0 5 4Z" fill="#2a6fb5" /></GrowMark></Slot>
              <Slot $w={21} $size={13}>A<GrowMark width="5" height="4"><path d="M0 0 2.5 4 5 0Z" fill="#2a6fb5" /></GrowMark></Slot>
            </ToolRow>
            <ToolRow $h={22}>
              <Slot $w={21} $bold $size={13} $serif>B</Slot>
              <Slot $w={22} $italic $size={14} $serif>I</Slot>
              <Slot $w={22} $under $size={13}>U</Slot>
              <Slot $w={12}><Caret /></Slot>
              <Slot $w={10}><Sep /></Slot>
              <Slot $w={22}><Svg w={15} h={15}><CellsBase cols={2} rows={2} cw={7} ch={7} stroke="#666" /></Svg></Slot>
              <Slot $w={10}><Caret /></Slot>
              <Slot $w={13}><Sep /></Slot>
              <Slot $w={18}><FillIcon /></Slot>
              <Slot $w={13}><Caret /></Slot>
              <Slot $w={24}><ColorBar $bar="#ff0000">A</ColorBar></Slot>
              <Slot $w={9}><Caret /></Slot>
              <Slot $w={14}><Sep /></Slot>
              <Slot $w={17} $size={9} $color="#444" $stack={10}>wén<WenMark>文</WenMark></Slot>
              <Slot $w={14}><Caret /></Slot>
            </ToolRow>
          </Stack>
        </GroupBody>
        <Label text="字体" launch />
      </Group>

      <Group $w={246}>
        <GroupBody $pad={8}>
          <Stack>
            <ToolRow>
              <Slot $w={22} $h={23}><Lines rows={[[1, 15, 2], [1, 15, 6], [1, 15, 10]]} /></Slot>
              <Slot $w={22} $h={23} $on><Lines rows={[[1, 15, 5], [1, 15, 9], [1, 15, 13]]} /></Slot>
              <Slot $w={22} $h={23}><Lines rows={[[1, 15, 7], [1, 15, 11], [1, 15, 15]]} /></Slot>
              <Slot $w={10}><Sep /></Slot>
              <Slot $w={19}><OrientIcon /></Slot>
              <Slot $w={12}><Caret /></Slot>
              <Gap $w={12} />
              <Slot $w={10}><Sep /></Slot>
              <Slot $w={20} $size={11} $color="#444" $stack={9}>
                ab
                <WrapLine>c<WrapIcon /></WrapLine>
              </Slot>
              <Gap $w={1} />
              自动换行
            </ToolRow>
            <ToolRow $h={22}>
              <Slot $w={22}><Lines rows={[[1, 15, 2], [1, 11, 6], [1, 15, 10], [1, 11, 14]]} /></Slot>
              <Slot $w={22}><Lines rows={[[1, 15, 2], [3, 13, 6], [1, 15, 10], [3, 13, 14]]} /></Slot>
              <Slot $w={22}><Lines rows={[[1, 15, 2], [5, 15, 6], [1, 15, 10], [5, 15, 14]]} /></Slot>
              <Slot $w={10}><Sep /></Slot>
              <Slot $w={21}><IndentIcon /></Slot>
              <Slot $w={22}><IndentIcon flip /></Slot>
              <Slot $w={10}><Sep /></Slot>
              <Slot $w={19}><MergeIcon /></Slot>
              <Gap $w={2} />
              合并后居中
              <Gap $w={9} />
              <Caret />
            </ToolRow>
          </Stack>
        </GroupBody>
        <Label text="对齐方式" launch />
      </Group>

      <Group $w={147}>
        <GroupBody $pad={8}>
          <Stack>
            <ToolRow><Combo $w={130}>常规<Caret /></Combo></ToolRow>
            <ToolRow $h={22}>
              <Slot $w={22}><AcctIcon /></Slot>
              <Slot $w={10}><Caret /></Slot>
              <Slot $w={26} $size={16}>%</Slot>
              <Slot $w={16} $size={14} $bold>,</Slot>
              <Slot $w={13}><Sep /></Slot>
              <Slot $w={22} $size={9} $stack={9}>←.0<span>.00</span></Slot>
              <Slot $w={21} $size={9} $stack={9}>.00<span>→.0</span></Slot>
            </ToolRow>
          </Stack>
        </GroupBody>
        <Label text="数字" launch />
      </Group>

      <Group $w={682}>
        <GroupBody $pad={8}>
          <Big $w={52}>
            <BigIcon><CondFmtIcon /></BigIcon>
            条件格式
            <BigCaret><Caret /></BigCaret>
          </Big>
          <Gap $w={2} />
          <Big $w={59}>
            <BigIcon><TableFmtIcon /></BigIcon>
            套用
            <BigCaret>表格格式<Caret /></BigCaret>
          </Big>
          <Gallery>
            {CHIPS.map(c => (
              <StyleChip
                key={c.text}
                $sel={c.sel}
                $bg={c.bg}
                $color={c.color}
                $bold={c.bold}
                $italic={c.italic}
                $border={c.border}
                $bottom={c.bottom}
              >
                {c.text}
              </StyleChip>
            ))}
          </Gallery>
          <GalleryScroll>
            <div><Tri color="#b4b4b4" /></div>
            <div><Tri dir="down" color="#666" /></div>
            <div><Tri dir="down" color="#666" /></div>
          </GalleryScroll>
        </GroupBody>
        <Label text="样式" />
      </Group>

      <Group $w={142}>
        <GroupBody $pad={8}>
          <Big $w={42}><BigIcon><InsertIcon /></BigIcon>插入<BigCaret><Caret /></BigCaret></Big>
          <Big $w={42}><BigIcon><DeleteIcon /></BigIcon>删除<BigCaret><Caret /></BigCaret></Big>
          <Big $w={42}><BigIcon><FormatIcon /></BigIcon>格式<BigCaret><Caret /></BigCaret></Big>
        </GroupBody>
        <Label text="单元格" />
      </Group>

      <Group $w={236}>
        <GroupBody $pad={10}>
          <SmallCol $w={86}>
            <SmallRow><SmallIcon><SigmaIcon /></SmallIcon>自动求和<Gap $w={9} /><Caret /></SmallRow>
            <SmallRow><SmallIcon><FillDownIcon /></SmallIcon>填充<Gap $w={6} /><Caret /></SmallRow>
            <SmallRow><SmallIcon><EraserIcon /></SmallIcon>清除<Gap $w={6} /><Caret /></SmallRow>
          </SmallCol>
          <Gap $w={3} />
          <Big $w={62}>
            <BigIcon>
              <SortLetters><span>A</span><span>Z</span></SortLetters>
              <FunnelIcon />
            </BigIcon>
            排序和筛选
            <BigCaret><Caret /></BigCaret>
          </Big>
          <Gap $w={3} />
          <Big $w={62}>
            <BigIcon><MagnifierIcon /></BigIcon>
            查找和选择
            <BigCaret><Caret /></BigCaret>
          </Big>
        </GroupBody>
        <Label text="编辑" />
      </Group>

      <Collapse><Chevron up /></Collapse>
    </Ribbon>

    <FormulaZone>
      <NameBox>J20<Caret $color="#777" /></NameBox>
      <Dots><svg width="3" height="11"><path d="M0 0h2v2H0ZM0 4.5h2v2H0ZM0 9h2v2H0Z" fill="#a8a8a8" /></svg></Dots>
      <FxBox>
        <FxSlot><svg width="11" height="11" viewBox="0 0 11 11" stroke="#bdbdbd" strokeWidth="1.6"><path d="M1 1l9 9M10 1 1 10" /></svg></FxSlot>
        <FxSlot><svg width="13" height="11" viewBox="0 0 13 11" fill="none" stroke="#bdbdbd" strokeWidth="1.8"><path d="M1 6l4 4 7-9" /></svg></FxSlot>
        <FxSlot>fx</FxSlot>
      </FxBox>
      <FormulaInput><Chevron /></FormulaInput>
    </FormulaZone>

    <SheetArea>
      <Sheet />
      <VScroll>
        <ScrollBtn><Tri color="#666" /></ScrollBtn>
        <VThumb />
      </VScroll>
    </SheetArea>

    <TabsBar>
      <NavArrows><Tri dir="left" color="#bdbdbd" /><Tri dir="right" color="#bdbdbd" /></NavArrows>
      <SheetTab $w={70}>Sheet1</SheetTab>
      <SheetTab $w={78}>ER图说明</SheetTab>
      <SheetTab $w={58}>练习1</SheetTab>
      <SheetTab $w={57} $on>练习2</SheetTab>
      <PlusBtn>+</PlusBtn>
      <Spring />
      <SplitDots />
      <HScroll>
        <HBtn><Tri dir="left" color="#666" /></HBtn>
        <HThumb />
      </HScroll>
      <Gap $w={21} />
    </TabsBar>

    <StatusBar>
      选定目标区域，然后按 ENTER 或选择“粘贴”
      <Spring />
      <ViewBtn $on><Svg w={14} h={14}><CellsBase cols={3} rows={3} cw={4.3} ch={4.3} stroke="#777" /></Svg></ViewBtn>
      <ViewBtn>
        <svg width="15" height="13" viewBox="0 0 15 13" fill="none" stroke="#777">
          <rect x=".5" y=".5" width="14" height="12" /><path d="M4 3.5h7M4 6.5h7M4 9.5h7" />
        </svg>
      </ViewBtn>
    </StatusBar>

    <TaskBar>
      <TaskItem />
      <Clock>17:40</Clock>
    </TaskBar>

    <NetPill>
      <NetRow $ml={47}>/s</NetRow>
      <NetRow $ml={10}>
        <NetArrow>↓</NetArrow>
        <span>0K/s</span>
      </NetRow>
    </NetPill>
    <Gauge>
      <svg width="58" height="58" viewBox="0 0 58 58" fill="none">
        <path d="M29 4A25 25 0 0 1 54 23" stroke="#4fd6c0" strokeWidth="1.6" />
      </svg>
      22<small>%</small>
    </Gauge>
    <Tip>个性设置，点我看看</Tip>
    <ImeBar>
      <ImeLogo>S</ImeLogo>
      <Slot $w={22} $bold $size={14}>英</Slot>
      <Slot $w={22} $bold $size={13}>•,</Slot>
      <Slot $w={22}>
        <svg width="16" height="16" viewBox="0 0 16 16" fill="none" stroke="#1b6fc4" strokeWidth="1.3">
          <circle cx="8" cy="8" r="7" /><path d="M4.5 10c1 2 6 2 7 0M5.5 5v2M10.5 5v2" />
        </svg>
      </Slot>
      <Slot $w={22}>
        <svg width="12" height="16" viewBox="0 0 12 16" fill="none" stroke="#1b6fc4" strokeWidth="1.4">
          <rect x="3.5" y="0" width="5" height="10" rx="2.5" fill="#1b6fc4" /><path d="M1 7c0 6 10 6 10 0M6 12v3M3 15.5h6" />
        </svg>
      </Slot>
      <Slot $w={23}>
        <svg width="17" height="12" viewBox="0 0 17 12">
          <rect width="17" height="12" rx="2" fill="#1b6fc4" />
          <path d="M2 3h2M5 3h2M8 3h2M11 3h2M14 3h1M2 6h2M5 6h2M8 6h2M11 6h2M14 6h1M4 9h9" stroke="#fff" />
        </svg>
      </Slot>
      <Slot $w={22}>
        <svg width="16" height="16" viewBox="0 0 16 16" fill="#a9b6c4">
          <circle cx="6" cy="4" r="3.5" /><path d="M0 15c0-5 2-7 6-7s6 2 6 7Z" />
          <rect x="8" y="10" width="8" height="6" rx="1" fill="#7f8c99" />
        </svg>
      </Slot>
      <Slot $w={20}>
        <svg width="15" height="14" viewBox="0 0 15 14" fill="#1b6fc4"><path d="M4 0 0 3l2 3 2-1v9h7V5l2 1 2-3-4-3-3 1.5Z" /></svg>
      </Slot>
      <Slot $w={22}>
        <svg width="13" height="13" viewBox="0 0 13 13" fill="#1b6fc4">
          <rect width="6" height="6" /><rect x="7" width="6" height="6" rx="1" /><rect y="7" width="6" height="6" /><rect x="7" y="7" width="6" height="6" />
        </svg>
      </Slot>
    </ImeBar>
  </Shell>
);

export default App;
